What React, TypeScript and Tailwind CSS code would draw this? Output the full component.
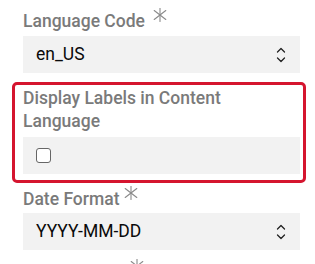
import React from "react";

function Asterisk() {
  return (
    <svg width="14" height="14" viewBox="0 0 14 14" className="shrink-0" aria-hidden="true">
      <g stroke="#8a8a8a" strokeWidth="1.1" strokeLinecap="round">
        <line x1="7" y1="0.5" x2="7" y2="13.5" />
        <line x1="1.2" y1="2.5" x2="12.8" y2="11.5" />
        <line x1="12.8" y1="2.5" x2="1.2" y2="11.5" />
      </g>
    </svg>
  );
}

function Chevrons() {
  return (
    <svg width="10" height="18" viewBox="0 0 10 18" aria-hidden="true">
      <g fill="none" stroke="#222" strokeWidth="1.3" strokeLinecap="round" strokeLinejoin="round">
        <polyline points="1.5,6 5,2.5 8.5,6" />
        <polyline points="1.5,12 5,15.5 8.5,12" />
      </g>
    </svg>
  );
}

function Label({ text, tight }: { text: string; tight?: boolean }) {
  return (
    <div className="flex items-start text-[17.5px] font-medium leading-[23px] text-[#7a7a7a]">
      <span>{text}</span>
      <span className={tight ? "ml-[4px] -mt-[2px]" : "ml-[8px] -mt-[2px]"}>
        <Asterisk />
      </span>
    </div>
  );
}

function Select({ value }: { value: string }) {
  return (
    <div className="flex h-[37px] items-center justify-between bg-[#f2f2f2] pl-[13px] pr-[14px] text-[17.5px] text-[#0a0a0a]">
      <span>{value}</span>
      <Chevrons />
    </div>
  );
}

export default function App() {
  return (
    <div
      className="h-[264px] w-[315px] overflow-hidden bg-white"
      style={{ fontFamily: "Roboto, 'Noto Sans', sans-serif" }}
    >
      <div className="pl-[23px] pr-[15px] pt-[10px]">
        <Label text="Language Code" />
        <div className="mt-[3px]">
          <Select value="en_US" />
        </div>
      </div>

      <div className="ml-[12px] mr-[9px] mt-[9px] rounded-[5px] border-[3px] border-[#d5152f] pb-[6px] pl-[8px] pr-[3px] pt-[2px]">
        <div className="text-[17.5px] font-medium leading-[23px] text-[#7a7a7a]">
          Display Labels in Content
          <br />
          Language
        </div>
        <div className="mt-[4px] flex h-[37px] items-center bg-[#f2f2f2] pl-[13px]">
          <div className="h-[15px] w-[15px] rounded-[3px] border border-[#666666] bg-white" />
        </div>
      </div>

      <div className="pl-[23px] pr-[15px] pt-[5px]">
        <Label text="Date Format" tight />
        <div className="mt-[2px]">
          <Select value="YYYY-MM-DD" />
        </div>
      </div>

      <div className="pl-[130px] pt-[9px]">
        <Asterisk />
      </div>
    </div>
  );
}
